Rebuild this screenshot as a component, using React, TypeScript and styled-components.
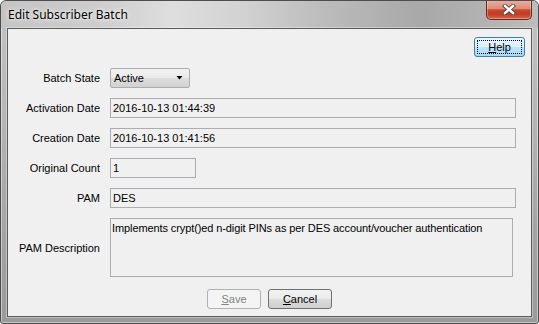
import React from 'react';
import styled, { createGlobalStyle } from 'styled-components';

const Global = createGlobalStyle`
  html, body { margin: 0; padding: 0; background: #ffffff; }
  body { width: 539px; height: 324px; overflow: hidden; }
  #root { width: 539px; height: 324px; }
`;

const Window = styled.div`
  box-sizing: border-box;
  width: 539px;
  height: 324px;
  border: 1px solid #4d4d4d;
  border-radius: 6px 6px 3px 3px;
  background: linear-gradient(180deg, #c4c4c4 0%, #b6b6b6 35%, #a2a2a2 75%, #9a9a9a 100%);
  box-shadow: inset 0 0 0 1px rgba(255, 255, 255, 0.45);
  display: flex;
  flex-direction: column;
  overflow: hidden;
  font-family: "Liberation Sans", Arial, sans-serif;
`;

const TitleBar = styled.div`
  height: 27px;
  flex: none;
  display: flex;
  align-items: center;
  padding: 0 6px 0 7px;
  background: linear-gradient(90deg, #c4c4c4 0%, #cdcdcd 18%, #dedede 32%, #d2d2d2 45%, #bcbcbc 60%, #a8a8a8 78%, #b4b4b4 92%, #bdbdbd 100%);
  border-radius: 5px 5px 0 0;
`;

const Title = styled.span`
  font-family: "Noto Sans", "Open Sans", sans-serif;
  font-size: 12px;
  color: #000;
  text-shadow: 0 0 6px rgba(255, 255, 255, 0.9), 0 0 3px rgba(255, 255, 255, 0.8);
`;

const CloseButton = styled.div`
  margin-left: auto;
  align-self: flex-start;
  margin-top: -1px;
  box-sizing: border-box;
  width: 46px;
  height: 20px;
  border: 1px solid #6e2a1e;
  border-top: none;
  border-radius: 0 0 5px 5px;
  background: linear-gradient(180deg, #e9b1a3 0%, #de8b77 45%, #c9472d 52%, #c03c22 75%, #d66a50 100%);
  box-shadow: inset 0 0 0 1px rgba(255, 255, 255, 0.3);
  display: flex;
  align-items: center;
  justify-content: center;
`;

const Client = styled.div`
  flex: 1;
  margin: 0 6px 6px;
  border: 1px solid #5b5b5b;
  box-shadow: 0 0 0 1px rgba(255, 255, 255, 0.35);
  background: #f0f0f0;
  display: flex;
  flex-direction: column;
  padding-top: 8px;
`;

const HelpRow = styled.div`
  display: flex;
  justify-content: flex-end;
  padding-right: 6px;
`;

const Button = styled.div<{ $w: number; $variant?: 'default' | 'disabled' | 'normal' }>`
  box-sizing: border-box;
  width: ${p => p.$w}px;
  height: 20px;
  border-radius: 3px;
  font-size: 11px;
  display: flex;
  align-items: center;
  justify-content: center;
  position: relative;
  ${p =>
    p.$variant === 'default'
      ? `border: 1px solid #3c7fb1;
         background: linear-gradient(180deg, #eaf6fd 0%, #d9f0fc 50%, #bee6fd 51%, #a7d9f5 100%);
         color: #000;`
      : p.$variant === 'disabled'
      ? `border: 1px solid #adb2b5;
         background: #f4f4f4;
         color: #838383;`
      : `border: 1px solid #707070;
         background: linear-gradient(180deg, #f2f2f2 0%, #ebebeb 50%, #dddddd 51%, #cfcfcf 100%);
         color: #000;`}
`;

const FocusRing = styled.span`
  position: absolute;
  inset: 2px;
  border: 1px dotted #000;
  pointer-events: none;
`;

const Form = styled.div`
  display: grid;
  grid-template-columns: 92px 1fr;
  column-gap: 10px;
  row-gap: 10px;
  margin-top: 11px;
`;

const Label = styled.div`
  font-size: 11px;
  color: #000;
  text-align: right;
  align-self: center;
  white-space: nowrap;
`;

const Field = styled.div<{ $w: number }>`
  box-sizing: border-box;
  width: ${p => p.$w}px;
  height: 20px;
  border: 1px solid #abadb3;
  padding: 0 2px;
  display: flex;
  align-items: center;
  font-size: 11px;
  color: #000;
  white-space: nowrap;
`;

const TextArea = styled.div<{ $w: number }>`
  box-sizing: border-box;
  width: ${p => p.$w}px;
  height: 59px;
  border: 1px solid #abadb3;
  padding: 2px 1px;
  font-size: 11px;
  line-height: 14px;
  letter-spacing: -0.1px;
  color: #000;
`;

const Combo = styled.div`
  box-sizing: border-box;
  width: 80px;
  height: 20px;
  border: 1px solid #acacac;
  border-radius: 2px;
  background: linear-gradient(180deg, #f2f2f2 0%, #ebebeb 50%, #dddddd 51%, #d2d2d2 100%);
  display: flex;
  align-items: center;
  padding: 0 6px 0 3px;
  font-size: 11px;
  color: #000;
`;

const ComboText = styled.span`
  flex: 1;
`;

const ButtonRow = styled.div`
  display: flex;
  justify-content: center;
  gap: 7px;
  margin-top: 12px;
`;

const Mn = styled.span`
  text-decoration: underline;
`;

export default function App() {
  return (
    <>
      <Global />
      <Window>
        <TitleBar>
          <Title>Edit Subscriber Batch</Title>
          <CloseButton>
            <svg width="14" height="11" viewBox="0 0 14 11">
              <path d="M3 2 L11 9 M11 2 L3 9" stroke="#4a4a4a" strokeWidth="4.2" strokeLinecap="square" />
              <path d="M3 2 L11 9 M11 2 L3 9" stroke="#ffffff" strokeWidth="2.4" strokeLinecap="square" />
            </svg>
          </CloseButton>
        </TitleBar>
        <Client>
          <HelpRow>
            <Button $w={51} $variant="default">
              <FocusRing />
              <span><Mn>H</Mn>elp</span>
            </Button>
          </HelpRow>
          <Form>
            <Label>Batch State</Label>
            <Combo>
              <ComboText>Active</ComboText>
              <svg width="7" height="4" viewBox="0 0 7 4">
                <path d="M0.5 0 H6.5 L3.5 3.5 Z" fill="#000" />
              </svg>
            </Combo>
            <Label>Activation Date</Label>
            <Field $w={406}>2016-10-13 01:44:39</Field>
            <Label>Creation Date</Label>
            <Field $w={406}>2016-10-13 01:41:56</Field>
            <Label>Original Count</Label>
            <Field $w={86}>1</Field>
            <Label>PAM</Label>
            <Field $w={406}>DES</Field>
            <Label>PAM Description</Label>
            <TextArea $w={403}>Implements crypt()ed n-digit PINs as per DES account/voucher authentication</TextArea>
          </Form>
          <ButtonRow>
            <Button $w={54} $variant="disabled"><span><Mn>S</Mn>ave</span></Button>
            <Button $w={64} $variant="normal"><span><Mn>C</Mn>ancel</span></Button>
          </ButtonRow>
        </Client>
      </Window>
    </>
  );
}
